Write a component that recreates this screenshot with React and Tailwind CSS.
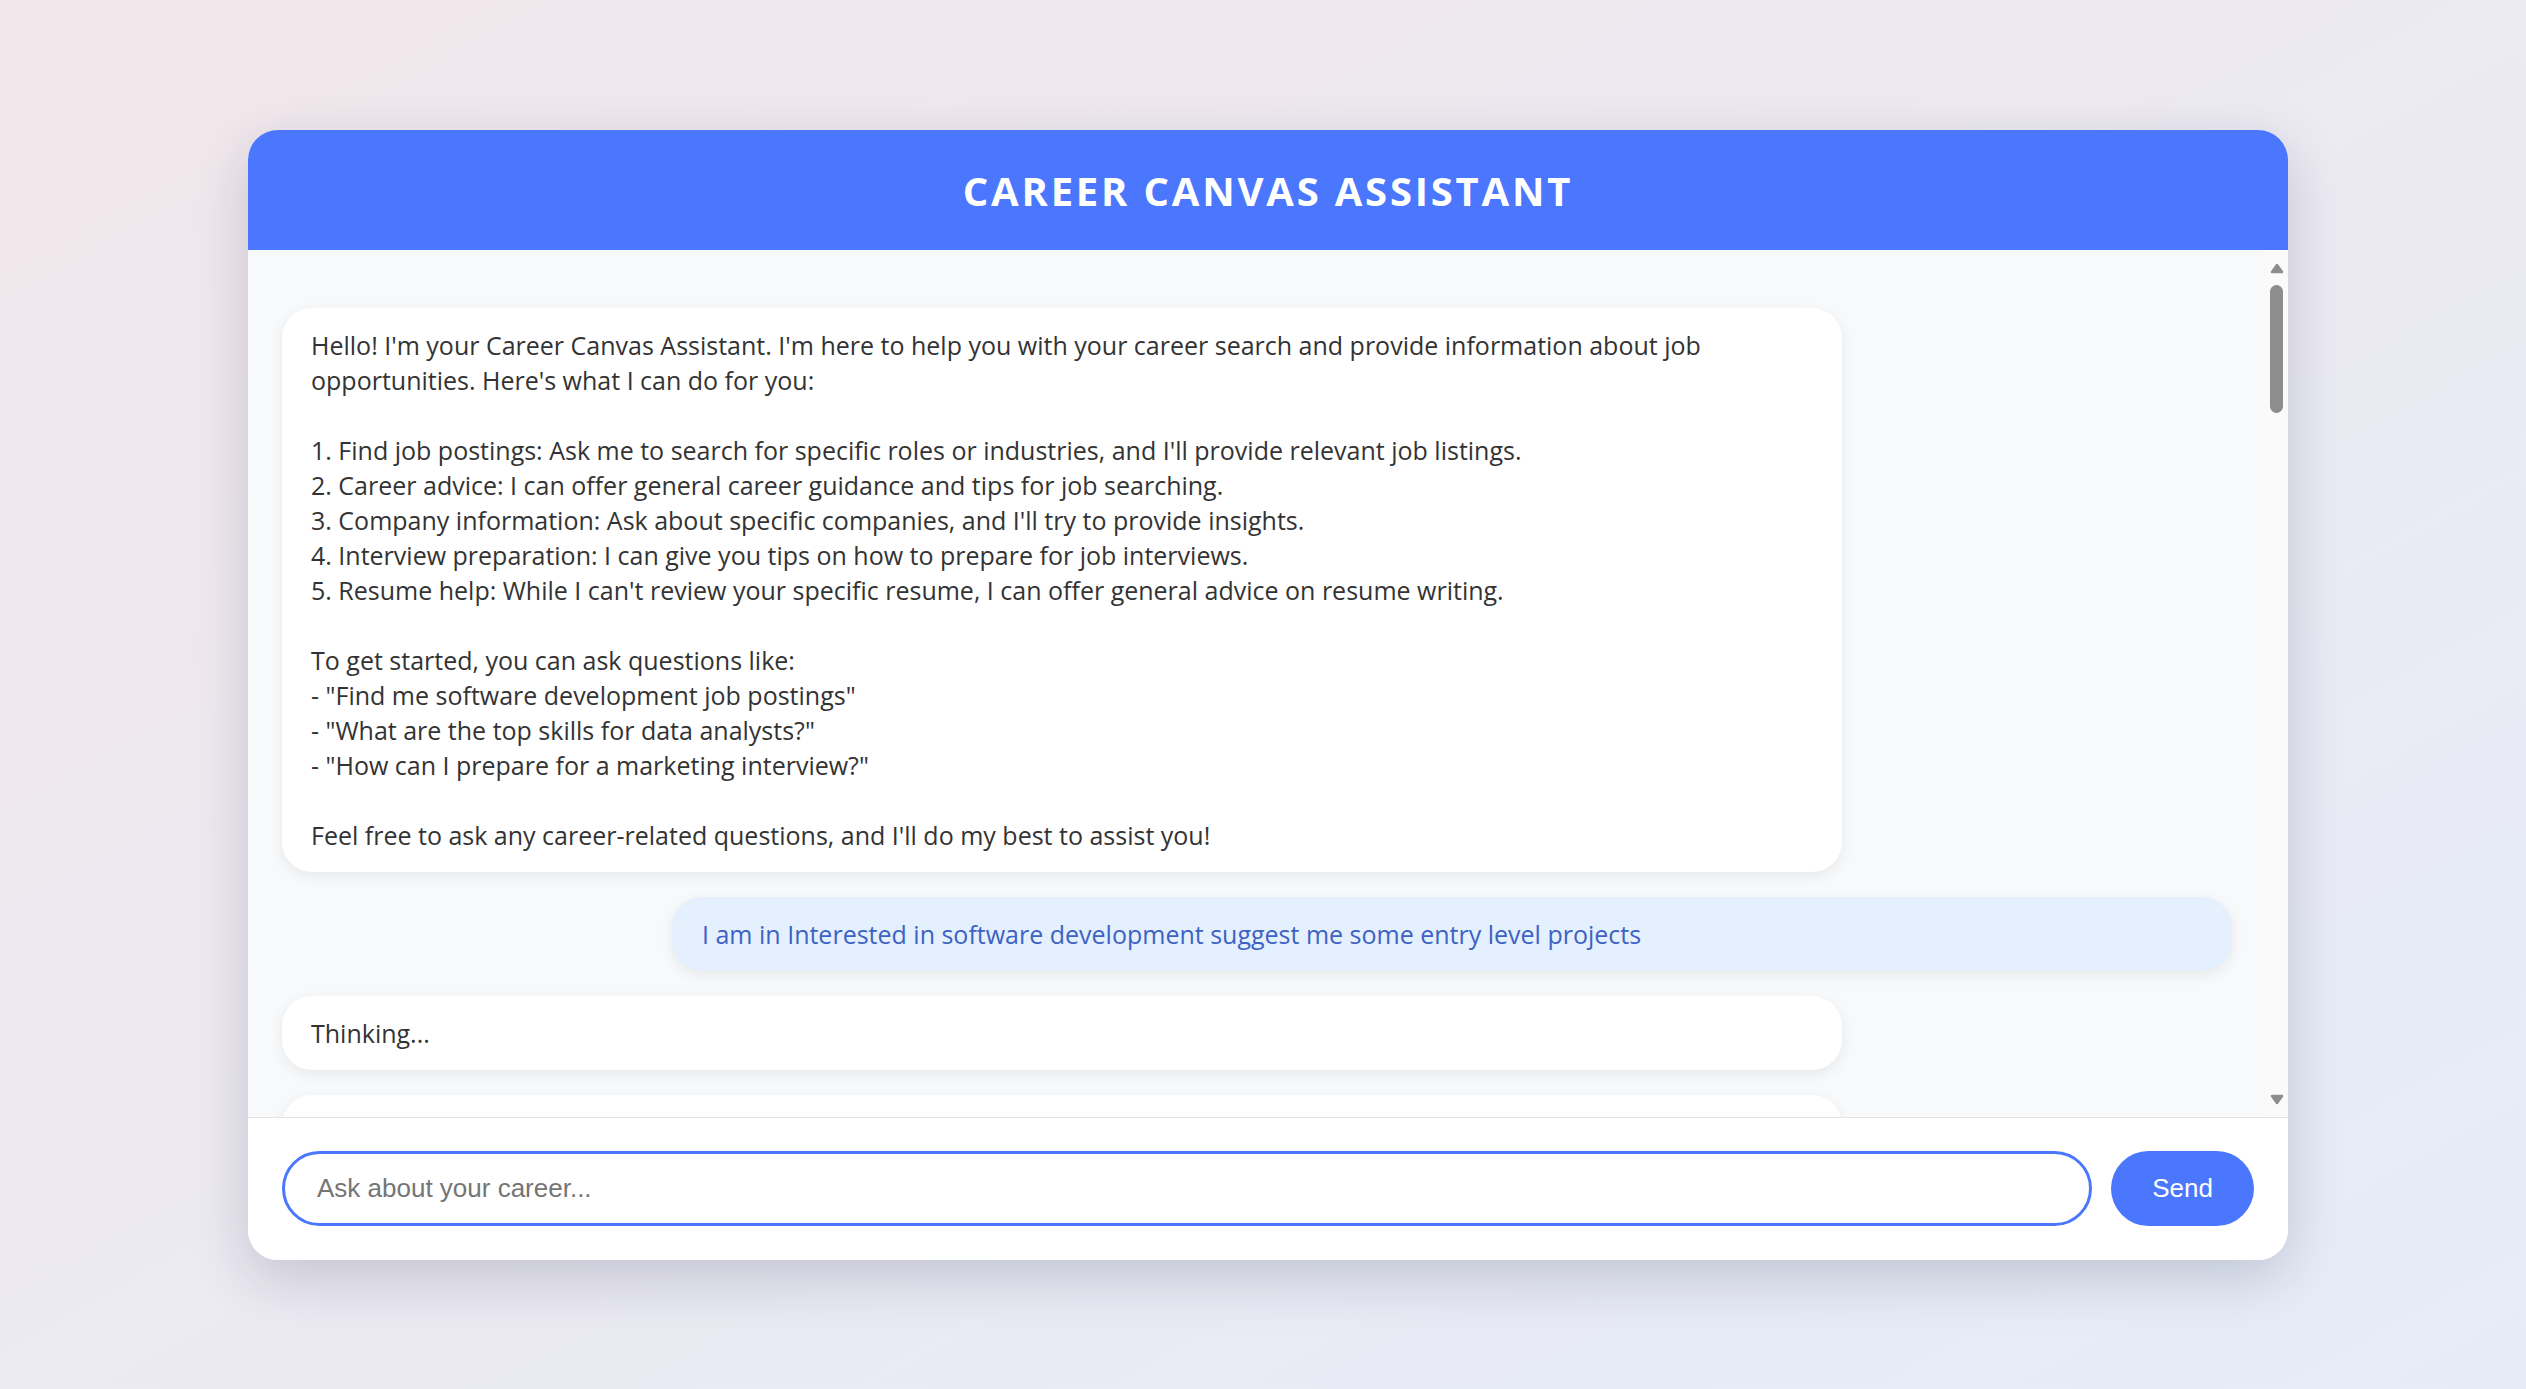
import React, { useState } from 'react'

const intro = `Hello! I'm your Career Canvas Assistant. I'm here to help you with your career search and provide information about job opportunities. Here's what I can do for you:

1. Find job postings: Ask me to search for specific roles or industries, and I'll provide relevant job listings.
2. Career advice: I can offer general career guidance and tips for job searching.
3. Company information: Ask about specific companies, and I'll try to provide insights.
4. Interview preparation: I can give you tips on how to prepare for job interviews.
5. Resume help: While I can't review your specific resume, I can offer general advice on resume writing.

To get started, you can ask questions like:
- "Find me software development job postings"
- "What are the top skills for data analysts?"
- "How can I prepare for a marketing interview?"

Feel free to ask any career-related questions, and I'll do my best to assist you!`

const messages = [
  { role: 'assistant', content: intro },
  { role: 'user', content: 'I am in Interested in software development suggest me some entry level projects' },
  { role: 'assistant', content: 'Thinking...' },
  { role: 'assistant', content: '' },
]

function Bubble({ role, content }) {
  if (role === 'user') {
    return (
      <div className="self-end w-[80%] shrink-0 rounded-[30px] bg-[#e4f0fd] px-[30px] pt-[20px] pb-[19px] text-[#3d62c4] shadow-[0_4px_14px_rgba(0,0,0,0.07)]">
        {content}
      </div>
    )
  }
  return (
    <div className="self-start w-[80%] shrink-0 min-h-[74px] rounded-[30px] bg-white px-[29px] pt-[20px] pb-[19px] text-[#333] whitespace-pre-wrap shadow-[0_4px_14px_rgba(0,0,0,0.07)]">
      {content}
    </div>
  )
}

function Arrow({ up }) {
  return (
    <svg width="14" height="11" viewBox="0 0 14 11">
      <polygon
        points={up ? '7,2 12,9 2,9' : '2,2 12,2 7,9'}
        fill="#8d8d8d"
        stroke="#8d8d8d"
        strokeWidth="2.5"
        strokeLinejoin="round"
      />
    </svg>
  )
}

export default function App() {
  const [text, setText] = useState('')

  return (
    <div className="h-screen w-full flex items-center justify-center pl-[10px] bg-linear-to-br from-[#f2e7eb] to-[#e5ecf8] font-['Open_Sans',sans-serif]">
      <div className="w-[2040px] h-[1130px] flex flex-col rounded-[30px] overflow-hidden bg-white shadow-[0_18px_55px_rgba(20,30,60,0.18)]">
        <header className="h-[120px] shrink-0 bg-[#4a77fd] flex items-center justify-center">
          <h1 className="text-white text-[40px] font-bold tracking-[2.8px] translate-y-[1px]">CAREER CANVAS ASSISTANT</h1>
        </header>

        <main className="flex-1 min-h-0 flex bg-[#f8f9fb]">
          <div className="flex-1 min-w-0 overflow-hidden flex flex-col gap-[25px] pt-[58px] pl-[34px] pr-[33px] text-[25px] leading-[35px]">
            {messages.map((m, i) => (
              <Bubble key={i} {...m} />
            ))}
          </div>
          <div className="w-[23px] shrink-0 bg-[#fafafa] flex flex-col items-center pt-[13px] pb-[12px]">
            <Arrow up />
            <div className="mt-[11px] w-[13px] h-[128px] rounded-full bg-[#8d8d8d]" />
            <div className="flex-1" />
            <Arrow />
          </div>
        </main>

        <footer className="h-[143px] shrink-0 border-t border-[#e3e3e3] bg-white flex items-center gap-[19px] pl-[34px] pr-[34px]">
          <input
            value={text}
            onChange={e => setText(e.target.value)}
            placeholder="Ask about your career..."
            className="flex-1 h-[75px] rounded-full border-[3px] border-[#4a77fd] bg-white pl-[32px] pr-[20px] text-[26px] font-['Liberation_Sans',Arial,sans-serif] text-[#333] placeholder:text-[#757575] outline-none"
          />
          <button className="w-[143px] h-[75px] rounded-full bg-[#4a77fd] text-white text-[26px] font-['Liberation_Sans',Arial,sans-serif]">
            Send
          </button>
        </footer>
      </div>
    </div>
  )
}
